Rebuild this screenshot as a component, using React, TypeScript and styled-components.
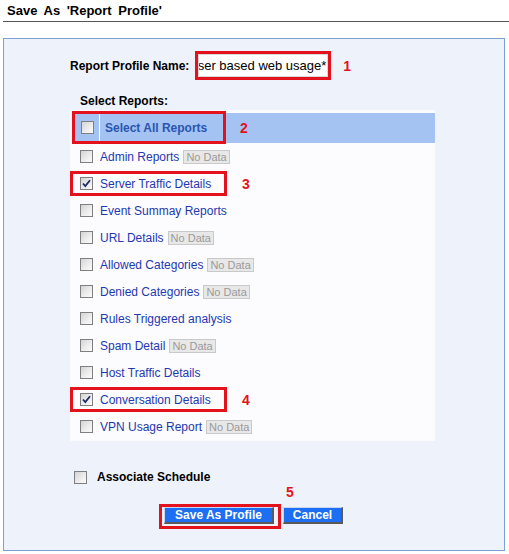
import React from "react";
import styled, { createGlobalStyle } from "styled-components";

const Global = createGlobalStyle`
  html, body { margin: 0; padding: 0; background: #ffffff; }
  body { font-family: "Liberation Sans", Arial, sans-serif; }
`;

const Page = styled.div`
  width: 509px;
  height: 554px;
  overflow: hidden;
`;

const TitleBar = styled.div`
  margin-left: 3px;
  height: 22px;
  box-sizing: border-box;
  border-bottom: 1px solid #555555;
  padding: 3px 0 0 4px;
  font-size: 13px;
  font-weight: bold;
  line-height: 16px;
  color: #000;
  word-spacing: 3px;
`;

const Panel = styled.div`
  margin: 16px 0 0 3px;
  width: 502px;
  height: 513px;
  box-sizing: border-box;
  border: 1px solid #7c9fd4;
  background: #eef3fb;
  padding-top: 12px;
  display: flex;
  flex-direction: column;
`;

const NameRow = styled.div`
  display: flex;
  align-items: center;
  padding-left: 66px;
  height: 29px;
`;

const BoldLabel = styled.span`
  font-size: 12px;
  font-weight: bold;
  color: #000;
`;

const Marker = styled.span<{ $gap: number }>`
  color: #e3121c;
  font-weight: bold;
  font-size: 14px;
  margin-left: ${(p) => p.$gap}px;
`;

const RedBox = styled.div<{ $on?: boolean }>`
  display: flex;
  align-items: center;
  box-sizing: border-box;
  border: 3px solid ${(p) => (p.$on ? "#e3121c" : "transparent")};
`;

const NameBox = styled(RedBox)`
  margin-left: 6px;
  width: 136px;
  height: 29px;
`;

const TextField = styled.div`
  width: 100%;
  height: 100%;
  box-sizing: border-box;
  background: #ffffff;
  border: 1px solid #d8d8d8;
  font-size: 13px;
  line-height: 21px;
  color: #000;
  white-space: nowrap;
  overflow: hidden;
  display: flex;
  justify-content: flex-end;
  padding-right: 1px;
`;

const SectionLabel = styled(BoldLabel)`
  display: block;
  margin: 14px 0 0 76px;
  line-height: 14px;
`;

const List = styled.div`
  margin: 2px 0 0 66px;
  width: 365px;
  background: #fcfcff;
  padding: 3px 0 1px 0;
`;

const Header = styled.div`
  margin-left: 2px;
  height: 30px;
  background: #a4c2f2;
  display: flex;
  align-items: center;
`;

const HeaderBox = styled(RedBox)`
  width: 154px;
  height: 33px;
  margin: -2px 0 -1px 0;
  padding-left: 6px;
`;

const Separator = styled.span`
  width: 1px;
  align-self: stretch;
  background: #ffffff;
  margin: 0 5px 0 5px;
`;

const HeaderText = styled.span`
  font-size: 12px;
  font-weight: bold;
  color: #2a55b0;
`;

const Row = styled.div`
  height: 27px;
  display: flex;
  align-items: center;
`;

const ItemBox = styled(RedBox)`
  min-width: ${(p) => (p.$on ? "157px" : "0")};
  height: 25px;
  padding: 0 8px 0 7px;
`;

const ItemText = styled.span`
  font-size: 12px;
  color: #2438b0;
  margin-left: 7px;
  white-space: nowrap;
`;

const Badge = styled.span`
  margin-left: 4px;
  font-size: 11px;
  line-height: 12px;
  color: #9a9a9a;
  background: #e8e8e8;
  border: 1px solid #c9c9c9;
  padding: 0 2px;
  white-space: nowrap;
`;

const Box = styled.span`
  display: inline-flex;
  align-items: center;
  justify-content: center;
  width: 13px;
  height: 13px;
  box-sizing: border-box;
  border: 1px solid #7f7f7f;
  background: linear-gradient(135deg, #d4d4d4 0%, #eeeeee 60%, #fbfbfb 100%);
  flex: none;
`;

const Check = ({ checked }: { checked?: boolean }) => (
  <Box>
    {checked && (
      <svg width="9" height="9" viewBox="0 0 9 9">
        <path d="M1 4.5 L3.3 7 L8 1.2" fill="none" stroke="#1e2a6e" strokeWidth="1.8" />
      </svg>
    )}
  </Box>
);

const ScheduleRow = styled.div`
  margin: 29px 0 0 70px;
  display: flex;
  align-items: center;
  height: 14px;
`;

const ScheduleText = styled(BoldLabel)`
  margin-left: 10px;
`;

const FiveRow = styled.div`
  margin: 2px 0 0 282px;
  height: 12px;
  line-height: 12px;
  display: flex;
`;

const Buttons = styled.div`
  margin: 6px 0 0 155px;
  display: flex;
  align-items: flex-start;
`;

const ButtonBox = styled(RedBox)`
  padding: 0 4px 2px 2px;
`;

const Button = styled.button<{ $w: number }>`
  width: ${(p) => p.$w}px;
  height: 17px;
  box-sizing: border-box;
  padding: 0;
  margin: 0;
  background: #1c6ef2;
  color: #ffffff;
  font-family: "Liberation Sans", Arial, sans-serif;
  font-size: 12px;
  font-weight: bold;
  line-height: 14px;
  border-top: 1px solid #c9d6f2;
  border-left: 1px solid #c9d6f2;
  border-right: 2px solid #5a5a5a;
  border-bottom: 2px solid #5a5a5a;
`;

const CancelButton = styled(Button)`
  margin: 3px 0 0 2px;
`;

type Item = { label: string; noData?: boolean; checked?: boolean; mark?: string };

const items: Item[] = [
  { label: "Admin Reports", noData: true },
  { label: "Server Traffic Details", checked: true, mark: "3" },
  { label: "Event Summay Reports" },
  { label: "URL Details", noData: true },
  { label: "Allowed Categories", noData: true },
  { label: "Denied Categories", noData: true },
  { label: "Rules Triggered analysis" },
  { label: "Spam Detail", noData: true },
  { label: "Host Traffic Details" },
  { label: "Conversation Details", checked: true, mark: "4" },
  { label: "VPN Usage Report", noData: true },
];

export default function App() {
  return (
    <Page>
      <Global />
      <TitleBar>Save As 'Report Profile'</TitleBar>
      <Panel>
        <NameRow>
          <BoldLabel>Report Profile Name:</BoldLabel>
          <NameBox $on>
            <TextField>ser based web usage*</TextField>
          </NameBox>
          <Marker $gap={12}>1</Marker>
        </NameRow>
        <SectionLabel>Select Reports:</SectionLabel>
        <List>
          <Header>
            <HeaderBox $on>
              <Check />
              <Separator />
              <HeaderText>Select All Reports</HeaderText>
            </HeaderBox>
            <Marker $gap={14}>2</Marker>
          </Header>
          {items.map((it) => (
            <Row key={it.label}>
              <ItemBox $on={!!it.mark}>
                <Check checked={it.checked} />
                <ItemText>{it.label}</ItemText>
                {it.noData && <Badge>No Data</Badge>}
              </ItemBox>
              {it.mark && <Marker $gap={15}>{it.mark}</Marker>}
            </Row>
          ))}
        </List>
        <ScheduleRow>
          <Check />
          <ScheduleText>Associate Schedule</ScheduleText>
        </ScheduleRow>
        <FiveRow>
          <Marker $gap={0}>5</Marker>
        </FiveRow>
        <Buttons>
          <ButtonBox $on>
            <Button $w={110}>Save As Profile</Button>
          </ButtonBox>
          <CancelButton $w={60}>Cancel</CancelButton>
        </Buttons>
      </Panel>
    </Page>
  );
}
